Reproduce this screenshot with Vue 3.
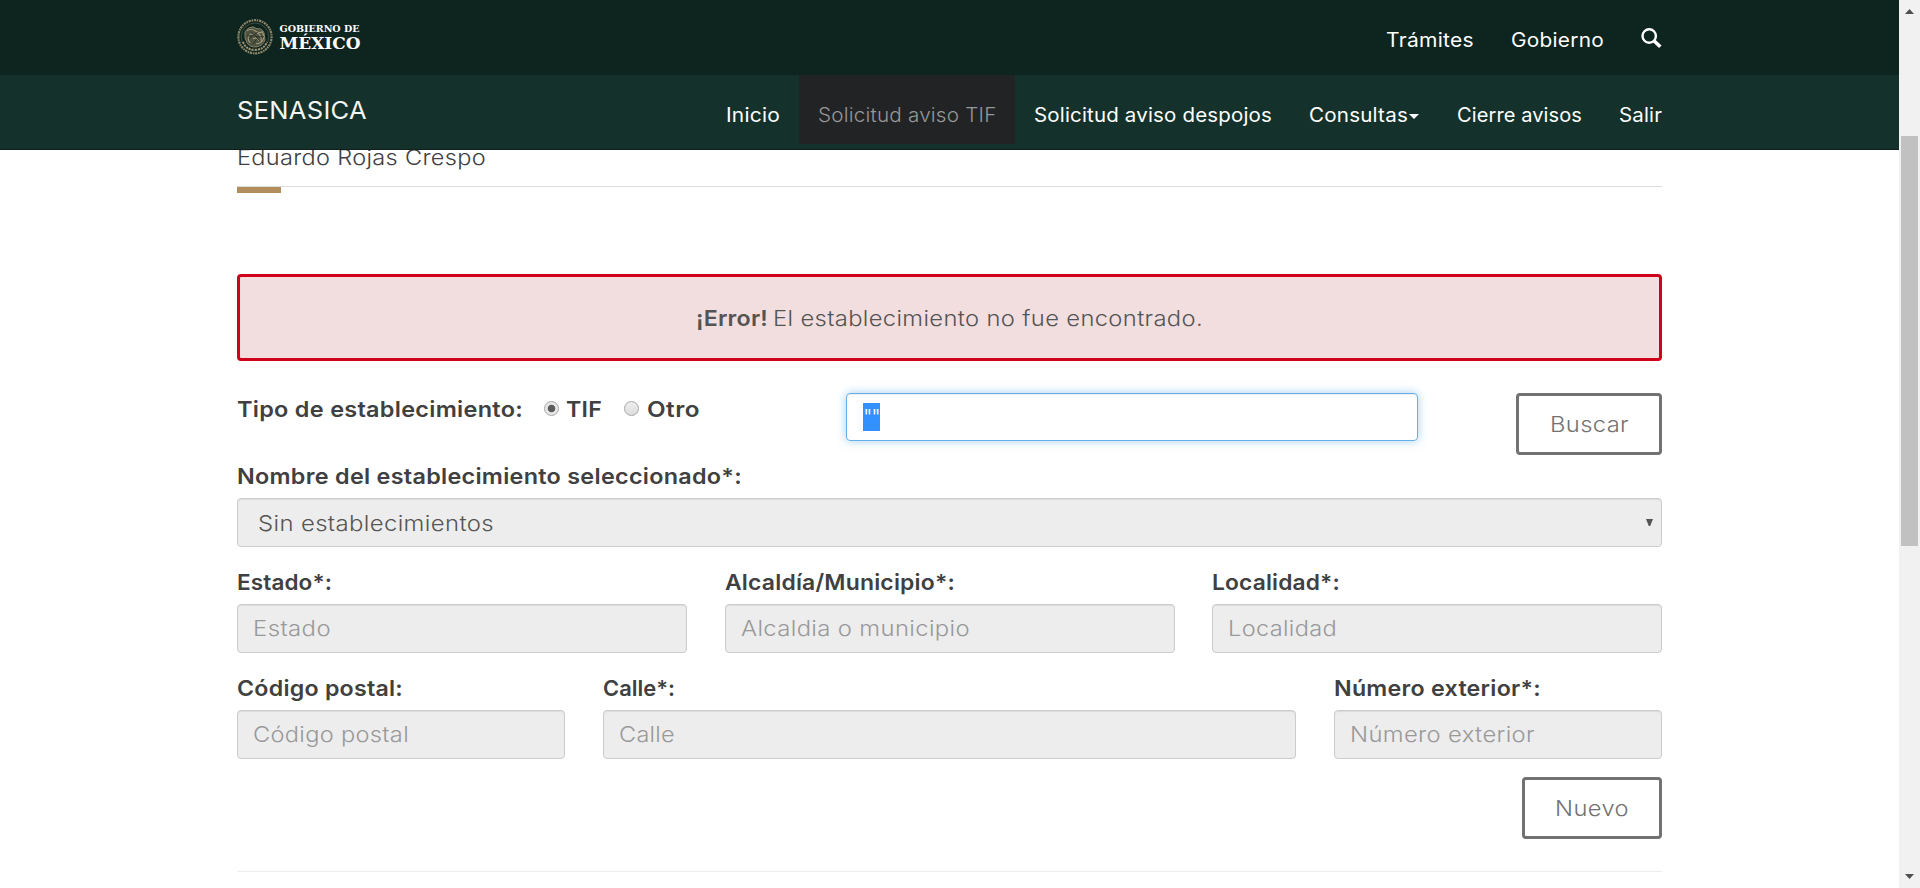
<script setup>
const topLinks = [
  { text: 'Trámites', width: 88 },
  { text: 'Gobierno', width: 93 },
]

const navLinks = [
  { text: 'Inicio', width: 54 },
  { text: 'Solicitud aviso TIF', width: 178.5, active: true },
  { text: 'Solicitud aviso despojos', width: 238 },
  { text: 'Consultas', width: 99, caret: true },
  { text: 'Cierre avisos', width: 125 },
  { text: 'Salir', width: 43 },
]

const rows = [
  [
    { label: 'Estado*:', labelWidth: 95, hint: 'Estado', hintWidth: 78, span: 4 },
    { label: 'Alcaldía/Municipio*:', labelWidth: 230, hint: 'Alcaldia o municipio', hintWidth: 229, span: 4 },
    { label: 'Localidad*:', labelWidth: 128, hint: 'Localidad', hintWidth: 109, span: 4 },
  ],
  [
    { label: 'Código postal:', labelWidth: 166, hint: 'Código postal', hintWidth: 156, span: 3 },
    { label: 'Calle*:', labelWidth: 72, hint: 'Calle', hintWidth: 56, span: 6 },
    { label: 'Número exterior*:', labelWidth: 207, hint: 'Número exterior', hintWidth: 185, span: 3 },
  ],
]

// Makes a line of text fill the given width: a little tracking, the rest by widening the letters.
const vTrack = {
  mounted(el, { value }) {
    const natural = el.getBoundingClientRect().width
    const tracking = (0.25 * (value - natural)) / el.textContent.length
    el.style.letterSpacing = `${tracking}px`
    const tracked = el.getBoundingClientRect().width
    el.style.width = `${value}px`
    el.style.transform = `scaleX(${value / tracked})`
  },
}
</script>

<template>
  <div class="screen">
    <div class="page">
      <header>
        <div class="bar top">
          <div class="container">
            <svg class="logo" width="130" height="52" viewBox="0 0 130 52">
              <g fill="none" stroke="#a19777" transform="translate(0 6.8)">
                <circle cx="18" cy="18" r="16.6" stroke-width="2.2" stroke-dasharray="1.5 .8 2.3 .7" opacity=".85" />
                <circle cx="18" cy="18" r="13.8" stroke-width=".7" opacity=".5" />
                <path d="M8 13q3-5 8-5l4 2q5-1 7 4l1 7q-2 6-8 7-7 1-10-4-3-5-2-11z" fill="#5f5f4b" stroke-width="1" opacity=".8" />
                <path d="M10 12q4-3 8 0t7 1q3 4 1 8t-7 4M13 24q-3-4-1-7t6-1M20 14q5 3 4 8M16 20q4-2 6 2" stroke-width="1.1" />
                <path d="M14 13l9 9M12 20l9-7M10 17h5M19 18h8M16 25l4-5" stroke="#242f25" stroke-width=".9" />
                <path d="M6 23q3 8 12 8t12-8" stroke-width="2" stroke-dasharray="2 1" />
              </g>
              <g fill="#fff" font-family="'DejaVu Serif', serif" font-weight="700">
                <text x="42.5" y="20" font-size="9.6" textLength="80" lengthAdjust="spacingAndGlyphs">GOBIERNO DE</text>
                <text x="42.5" y="37" font-size="16.8" textLength="81" lengthAdjust="spacingAndGlyphs">MÉXICO</text>
              </g>
            </svg>
            <nav class="top-links">
              <a v-for="l in topLinks" :key="l.text"><span v-track="l.width">{{ l.text }}</span></a>
              <svg class="search" width="21" height="21" viewBox="0 0 21 21" fill="none" stroke="#fff">
                <circle cx="8.2" cy="8" r="6.7" stroke-width="2.4" />
                <path d="M13 12.8l6.3 6" stroke-width="3.6" />
              </svg>
            </nav>
          </div>
        </div>
        <div class="bar sub">
          <div class="container">
            <div class="brand"><span v-track="130">SENASICA</span></div>
            <nav class="nav">
              <a v-for="l in navLinks" :key="l.text" :class="{ active: l.active }">
                <span v-track="l.width">{{ l.text }}</span><i v-if="l.caret" class="caret"></i>
              </a>
            </nav>
          </div>
        </div>
      </header>

      <main class="container main">
        <h3 class="user"><span v-track="249">Eduardo Rojas Crespo</span></h3>
        <div class="alert"><b v-track="72">¡Error!</b><span v-track="430">El establecimiento no fue encontrado.</span></div>

        <div class="finder">
          <div class="kind">
            <span v-track="286">Tipo de establecimiento:</span>
            <i class="radio on"></i><span v-track="36">TIF</span>
            <i class="radio"></i><span v-track="53">Otro</span>
          </div>
          <div class="query"><span class="selection">""</span></div>
          <div class="button search-button"><span v-track="79">Buscar</span></div>
        </div>

        <div class="label"><span v-track="505">Nombre del establecimiento seleccionado*:</span></div>
        <div class="field select">
          <span v-track="236">Sin establecimientos</span>
          <svg width="7" height="7" viewBox="0 0 7 7"><path d="M0 0h7L4.2 7H2.8z" fill="#555" /></svg>
        </div>

        <div v-for="(row, i) in rows" :key="i" class="row">
          <div v-for="f in row" :key="f.label" :class="'span-' + f.span">
            <div class="label"><span v-track="f.labelWidth">{{ f.label }}</span></div>
            <div class="field"><span v-track="f.hintWidth">{{ f.hint }}</span></div>
          </div>
        </div>

        <div class="actions"><div class="button new-button"><span v-track="74">Nuevo</span></div></div>
        <hr />
      </main>
    </div>

    <div class="scrollbar">
      <svg width="9" height="5" viewBox="0 0 9 5"><path d="M0 5L4.5 0 9 5z" fill="#505050" /></svg>
      <div class="thumb"></div>
      <svg class="down" width="9" height="5" viewBox="0 0 9 5"><path d="M0 0L4.5 5 9 0z" fill="#505050" /></svg>
    </div>
  </div>
</template>

<style>
html, body { margin: 0; overflow: hidden; }
</style>

<style scoped>
* { box-sizing: border-box; }
.screen {
  display: flex;
  width: 1920px;
  height: 888px;
  overflow: hidden;
  background: #fff;
  font-family: Inter, "Open Sans", sans-serif;
  font-size: 21.8px;
  font-weight: 300;
  color: #545454;
}
.page { width: 1899px; }
.container { width: 1425px; margin: 0 auto; white-space: nowrap; }
span, b { display: inline-block; transform-origin: left center; text-align: left; }
.bar { height: 75px; }
.bar .container { display: flex; justify-content: space-between; height: 100%; }
.top { background: #0e241e; }
.sub { background: #14322b; border-bottom: 1px solid #101f1d; }
.logo { margin-top: 12px; }
.top-links { display: flex; align-items: flex-start; gap: 37px; padding-top: 26px; }
.top-links a, .nav a { color: #fff; font-size: 19.4px; font-weight: 400; line-height: 28px; }
.search { margin-top: 2px; }
.brand { padding-top: 14px; color: #f3f5f4; font-size: 24.2px; font-weight: 400; line-height: 44px; }
.nav { display: flex; margin-right: -18.75px; }
.nav a { display: flex; align-items: flex-start; height: 69px; padding: 26px 18.75px 0; }
.nav .active { background: #222325; color: #979797; font-weight: 300; }
.caret { margin: 13px 0 0 1px; border: 5px solid transparent; border-top-color: #fff; border-bottom: 0; }

.user {
  position: relative;
  height: 37px;
  margin: 0;
  border-bottom: 1px solid #ddd;
  color: #404041;
  font-size: 21.8px;
  font-weight: 300;
  line-height: 14px;
}
.user::after { content: ""; position: absolute; left: 0; top: 37px; width: 44px; height: 6px; background: #b38e5d; }
header { position: relative; z-index: 1; }
.alert {
  display: flex;
  justify-content: center;
  gap: 5px;
  height: 87px;
  margin-top: 87px;
  border: 3px solid #d0021b;
  border-radius: 4px;
  background: #f2dede;
  line-height: 82px;
}
b { font-weight: 600; }
.finder { display: flex; height: 62px; margin-top: 32px; }
.kind { display: flex; width: 609px; color: #404041; font-weight: 600; line-height: 32px; }
.radio {
  width: 15px;
  height: 15px;
  margin: 8px 8px 0 21px;
  border: 1px solid #a6a6a6;
  border-radius: 50%;
  background: linear-gradient(#eee, #ddd);
}
.on { margin-right: 7px; background: radial-gradient(circle, #5c5c5c 3.4px, #e8e8e8 4.2px); }
.on + span + .radio { margin-left: 22px; }
.query {
  width: 572px;
  height: 48px;
  padding: 9px 16px;
  border: 1px solid #66afe9;
  border-radius: 4px;
  box-shadow: inset 0 1px 1px rgba(0, 0, 0, .075), 0 0 10px rgba(102, 175, 233, .6);
}
.selection { display: block; width: 17px; height: 28px; background: #3390ff; color: #fff; font-size: 21.5px; letter-spacing: -1.2px; line-height: 28px; }
.button {
  height: 62px;
  margin-left: auto;
  border: 3px solid #727272;
  border-radius: 4px;
  color: #727272;
  line-height: 57px;
  text-align: center;
}
.search-button { width: 146px; }
.new-button { width: 140px; }
.label { height: 43px; color: #404041; font-weight: 600; line-height: 43px; }
.field {
  height: 49px;
  padding: 0 15px;
  border: 1px solid #ccc;
  border-radius: 4px;
  background: #ededed;
  box-shadow: inset 0 1px 1px rgba(0, 0, 0, .075);
  color: #999;
  line-height: 47px;
}
.select { display: flex; justify-content: space-between; align-items: center; padding: 1px 8px 0 20px; color: #555; }
.select svg { margin-top: -1px; }
.row { display: grid; grid-template-columns: repeat(12, minmax(0, 1fr)); column-gap: 37.5px; margin-top: 14px; }
.span-3 { grid-column: span 3; }
.span-4 { grid-column: span 4; }
.span-6 { grid-column: span 6; }
.actions { display: flex; margin-top: 18px; }
hr { height: 1px; margin: 32px 0 0; border: 0; background: #eee; }

.scrollbar { display: flex; flex-direction: column; width: 21px; height: 888px; padding: 9px 2px; background: #f1f1f1; }
.scrollbar svg { margin-left: 4px; }
.thumb { width: 17px; height: 410px; margin-top: 122px; background: #c1c1c1; }
.down { margin-top: auto; }
</style>
